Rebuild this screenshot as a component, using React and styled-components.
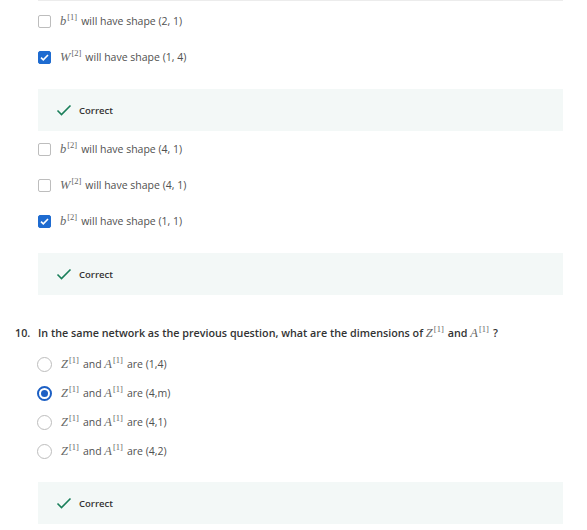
import React from "react";
import styled, { createGlobalStyle } from "styled-components";

const Global = createGlobalStyle`
  html, body { margin: 0; padding: 0; background: #fff; }
  body { font-family: "Open Sans", "Liberation Sans", sans-serif; color: #333; }
`;

const Page = styled.div`
  width: 587px;
  padding: 0 24px 0 38px;
  box-sizing: border-box;
  display: flex;
  flex-direction: column;
`;

const TopEdge = styled.div`
  height: 1px;
  width: 525px;
  background: #ececec;
  margin-bottom: 2px;
`;

const OptionRow = styled.div`
  display: flex;
  align-items: center;
  height: ${(p) => p.$h}px;
  gap: 9px;
  font-size: 10.5px;
  color: #505050;
`;

const Checkbox = styled.span`
  box-sizing: border-box;
  width: 13px;
  height: 13px;
  border-radius: 2px;
  border: 1px solid ${(p) => (p.$checked ? "#1e6bd0" : "#bdbdbd")};
  background: ${(p) => (p.$checked ? "#1e6bd0" : "#fff")};
  display: flex;
  align-items: center;
  justify-content: center;
  flex-shrink: 0;
`;

const Radio = styled.span`
  box-sizing: border-box;
  width: 15px;
  height: 15px;
  border-radius: 50%;
  border: ${(p) => (p.$checked ? "2px solid #1c5fc4" : "1px solid #bdbdbd")};
  display: flex;
  align-items: center;
  justify-content: center;
  flex-shrink: 0;
  margin-left: -1px;
  &::after {
    content: "";
    display: ${(p) => (p.$checked ? "block" : "none")};
    width: 7px;
    height: 7px;
    border-radius: 50%;
    background: #1c5fc4;
  }
`;

const Label = styled.span`
  white-space: pre;
  line-height: 16px;
`;

const MathVar = styled.span`
  font-family: "Liberation Serif", "DejaVu Serif", serif;
  font-style: italic;
  font-weight: 400;
  font-size: 12.5px;
  color: #666;
`;

const Sup = styled.span`
  font-family: "Liberation Serif", "DejaVu Serif", serif;
  font-style: normal;
  font-weight: 400;
  font-size: 8.5px;
  color: #666;
  position: relative;
  top: -5px;
  margin-left: 1px;
  margin-right: 4px;
`;

const Feedback = styled.div`
  width: 525px;
  height: 42px;
  background: #f3f8f7;
  display: flex;
  align-items: center;
  gap: 7px;
  padding-left: 18px;
  box-sizing: border-box;
  margin-top: ${(p) => p.$mt}px;
  font-size: 9.5px;
  font-weight: 600;
  color: #333;
`;

const Question = styled.div`
  display: flex;
  align-items: center;
  height: 20px;
  margin-top: 28px;
  margin-bottom: 7px;
  margin-left: -23px;
  font-size: 10.75px;
  font-weight: 600;
  color: #333;
`;

const QNum = styled.span`
  width: 23px;
  flex-shrink: 0;
`;

const Check = ({ color = "#1a7f5a", size = 16 }) => (
  <svg width={size} height={size * 0.75} viewBox="0 0 16 12" fill="none">
    <path d="M1.5 6.5 L5.5 10.5 L14.5 1.5" stroke={color} strokeWidth="1.6" />
  </svg>
);

const WhiteCheck = () => (
  <svg width="9" height="7" viewBox="0 0 9 7" fill="none">
    <path d="M1 3.6 L3.3 5.8 L8 1" stroke="#fff" strokeWidth="1.6" />
  </svg>
);

const M = ({ v, s }) => (
  <>
    <MathVar>{v}</MathVar>
    <Sup>[{s}]</Sup>
  </>
);

const CheckOption = ({ checked, v, s, text }) => (
  <OptionRow $h={36}>
    <Checkbox $checked={checked}>{checked && <WhiteCheck />}</Checkbox>
    <Label>
      <M v={v} s={s} />
      {text}
    </Label>
  </OptionRow>
);

const RadioOption = ({ checked, dims }) => (
  <OptionRow $h={29}>
    <Radio $checked={checked} />
    <Label>
      <M v="Z" s="1" />
      {"and "}
      <M v="A" s="1" />
      {"are " + dims}
    </Label>
  </OptionRow>
);

const Correct = ({ mt }) => (
  <Feedback $mt={mt}>
    <Check />
    <span>Correct</span>
  </Feedback>
);

export default function App() {
  return (
    <>
      <Global />
      <Page>
        <TopEdge />
        <CheckOption v="b" s="1" text="will have shape (2, 1)" />
        <CheckOption checked v="W" s="2" text="will have shape (1, 4)" />
        <Correct mt={14} />
        <CheckOption v="b" s="2" text="will have shape (4, 1)" />
        <CheckOption v="W" s="2" text="will have shape (4, 1)" />
        <CheckOption checked v="b" s="2" text="will have shape (1, 1)" />
        <Correct mt={14} />
        <Question>
          <QNum>10.</QNum>
          <Label>
            {"In the same network as the previous question, what are the dimensions of "}
            <M v="Z" s="1" />
            {"and "}
            <M v="A" s="1" />
            {"?"}
          </Label>
        </Question>
        <RadioOption dims="(1,4)" />
        <RadioOption checked dims="(4,m)" />
        <RadioOption dims="(4,1)" />
        <RadioOption dims="(4,2)" />
        <Correct mt={16} />
      </Page>
    </>
  );
}
